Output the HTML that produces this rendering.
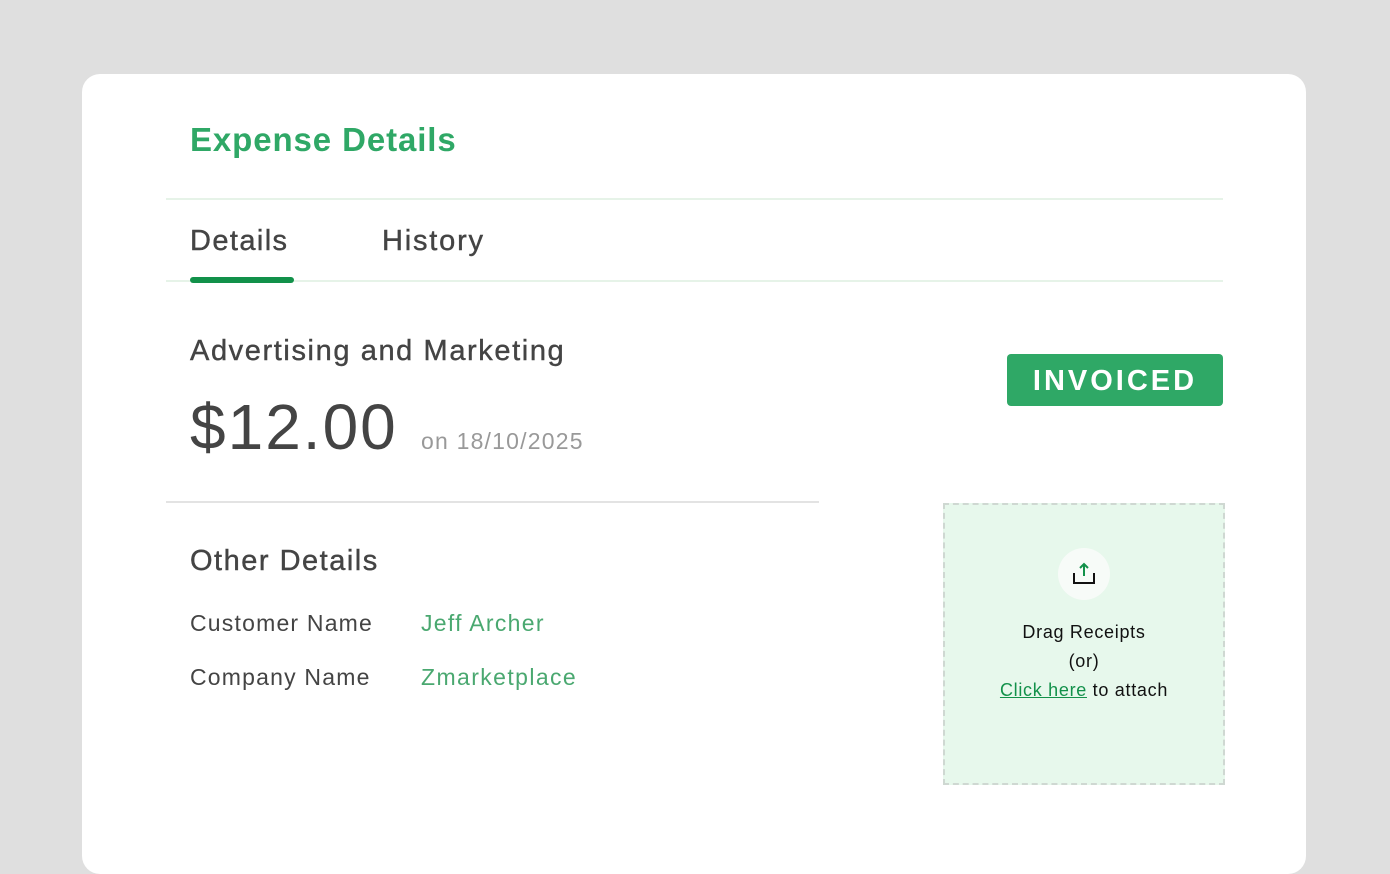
<!DOCTYPE html>
<html><head><style>
*{margin:0;padding:0;box-sizing:border-box}
body{width:1390px;height:834px;background:#dfdfdf;font-family:"Liberation Sans",sans-serif;position:relative;overflow:hidden}
.card{position:absolute;left:82px;top:74px;width:1224px;height:800px;background:#fff;border-radius:18px}
.a{position:absolute;white-space:nowrap}
</style></head><body>
<div class="card"></div>
<div class="a" style="left:190px;top:121px;font-size:33px;font-weight:bold;color:#2fa866;letter-spacing:0.9px">Expense Details</div>
<div class="a" style="left:166px;top:198px;width:1057px;height:2px;background:#e6f3e8"></div>
<div class="a" style="left:190px;top:225px;font-size:29px;color:#444;letter-spacing:1.4px;-webkit-text-stroke:0.4px #444">Details</div>
<div class="a" style="left:382px;top:225px;font-size:29px;color:#444;letter-spacing:1.8px;-webkit-text-stroke:0.4px #444">History</div>
<div class="a" style="left:166px;top:280px;width:1057px;height:2px;background:#e6f3e8"></div>
<div class="a" style="left:190px;top:277px;width:104px;height:6px;border-radius:3px;background:#12914a"></div>
<div class="a" style="left:190px;top:335px;font-size:29px;color:#444;letter-spacing:1.6px;-webkit-text-stroke:0.4px #444">Advertising and Marketing</div>
<div class="a" style="left:190px;top:390px;font-size:64px;color:#444;letter-spacing:2px">$12.00</div>
<div class="a" style="left:421px;top:428px;font-size:23px;color:#999;letter-spacing:1.2px">on 18/10/2025</div>
<div class="a" style="left:1007px;top:354px;width:216px;height:52px;background:#2fa866;border-radius:4px;color:#fff;font-size:29px;font-weight:bold;letter-spacing:3px;text-align:center;line-height:54px">INVOICED</div>
<div class="a" style="left:166px;top:501px;width:653px;height:2px;background:#e3e3e3"></div>
<div class="a" style="left:190px;top:545px;font-size:29px;color:#444;letter-spacing:1.5px;-webkit-text-stroke:0.4px #444">Other Details</div>
<div class="a" style="left:190px;top:610px;font-size:23px;color:#444;letter-spacing:1.2px">Customer Name</div>
<div class="a" style="left:421px;top:610px;font-size:23px;color:#4aa870;letter-spacing:1.3px">Jeff Archer</div>
<div class="a" style="left:190px;top:664px;font-size:23px;color:#444;letter-spacing:1.2px">Company Name</div>
<div class="a" style="left:421px;top:664px;font-size:23px;color:#4aa870;letter-spacing:1.4px">Zmarketplace</div>
<div class="a" style="left:943px;top:503px;width:282px;height:282px;background:#e7f8ec;border:2px dashed #cfd8d2"></div>
<div class="a" style="left:1058px;top:548px;width:52px;height:52px;border-radius:50%;background:#f7fbf8"></div>
<svg class="a" style="left:1068px;top:558px" width="32" height="32" viewBox="0 0 32 32"><path d="M16 6v12M12 10l4-4 4 4" stroke="#12914a" stroke-width="2" fill="none"/><path d="M6 15v10h20V15" stroke="#111" stroke-width="2" fill="none"/></svg>
<div class="a" style="left:943px;width:282px;top:618px;text-align:center;font-size:18px;color:#111;line-height:29px;letter-spacing:0.7px">Drag Receipts<br>(or)<br><span style="color:#12914a;text-decoration:underline">Click here</span> to attach</div>
</body></html>
